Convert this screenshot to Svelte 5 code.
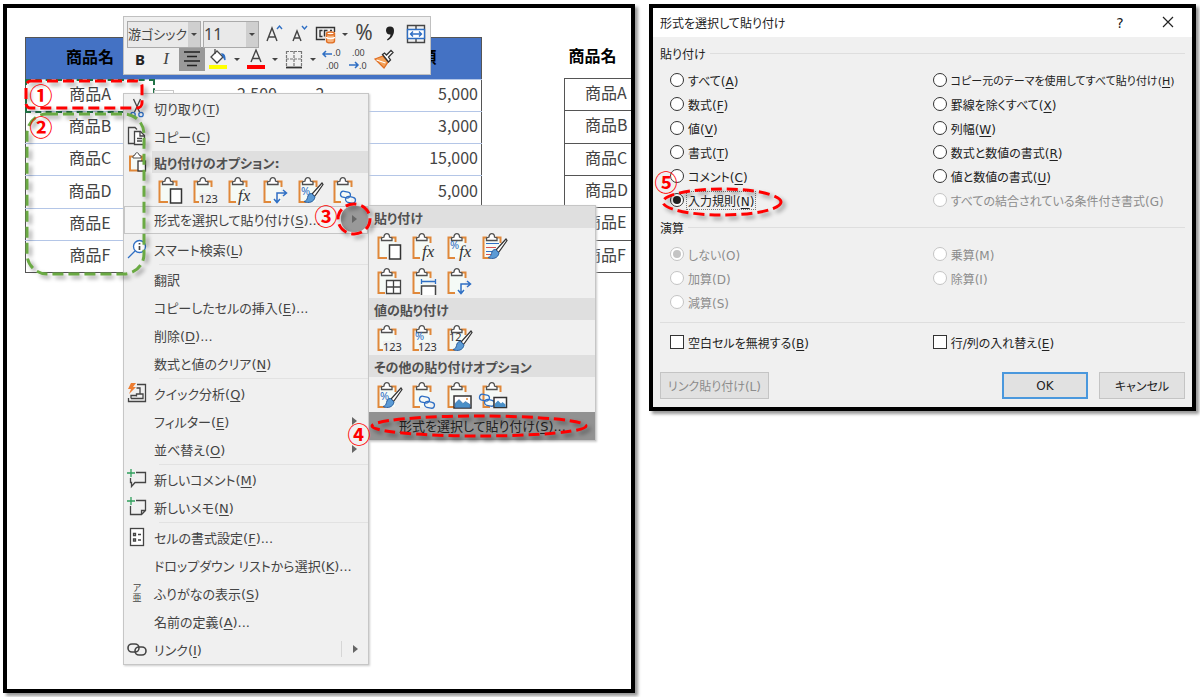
<script lang="ts">
  type Item = {
    text: string;
    key: string;
    tail?: string;
    icon?: string;
    more?: boolean;
    sep?: boolean;
  };

  const rows = [
    ["商品A", "2,500", "2", "5,000"],
    ["商品B", "", "", "3,000"],
    ["商品C", "", "", "15,000"],
    ["商品D", "", "", "5,000"],
    ["商品E", "", "", ""],
    ["商品F", "", "", ""],
  ];

  const topItems: Item[] = [
    { text: "切り取り", key: "T", icon: "cut" },
    { text: "コピー", key: "C", icon: "copy" },
  ];
  const items: Item[] = [
    { text: "スマート検索", key: "L", icon: "search", sep: true },
    { text: "翻訳", key: "" },
    { text: "コピーしたセルの挿入", key: "E", tail: "..." },
    { text: "削除", key: "D", tail: "..." },
    { text: "数式と値のクリア", key: "N", sep: true },
    { text: "クイック分析", key: "Q", icon: "analyze" },
    { text: "フィルター", key: "E", more: true },
    { text: "並べ替え", key: "O", more: true, sep: true },
    { text: "新しいコメント", key: "M", icon: "comment" },
    { text: "新しいメモ", key: "N", icon: "memo", sep: true },
    { text: "セルの書式設定", key: "F", tail: "...", icon: "cells" },
    { text: "ドロップダウン リストから選択", key: "K", tail: "..." },
    { text: "ふりがなの表示", key: "S", icon: "ruby" },
    { text: "名前の定義", key: "A", tail: "..." },
    { text: "リンク", key: "I", icon: "link", more: true },
  ];

  const quickPaste = ["paste", "values", "fx", "transpose", "format", "link"];
  const pasteGroups = [
    {
      title: "貼り付け",
      lines: [
        ["paste", "fx", "percentfx", "source"],
        ["grid", "widths", "transpose"],
      ],
    },
    { title: "値の貼り付け", lines: [["values", "percentvalues", "valuesformat"]] },
    {
      title: "その他の貼り付けオプション",
      lines: [["format", "link", "picture", "linkpicture"]],
    },
  ];

  const pasteChoices = [
    ["すべて", "A"],
    ["コピー元のテーマを使用してすべて貼り付け", "H"],
    ["数式", "F"],
    ["罫線を除くすべて", "X"],
    ["値", "V"],
    ["列幅", "W"],
    ["書式", "T"],
    ["数式と数値の書式", "R"],
    ["コメント", "C"],
    ["値と数値の書式", "U"],
    ["入力規則", "N"],
    ["すべての結合されている条件付き書式", "G"],
  ];
  const operations = [
    ["しない", "O"],
    ["乗算", "M"],
    ["加算", "D"],
    ["除算", "I"],
    ["減算", "S"],
  ];

  let font = $state("游ゴシック");
  let size = $state("11");
  let choice = $state("N");
  let operation = $state("O");
  let skipBlanks = $state(false);
  let transpose = $state(false);
</script>

{#snippet label(text: string, key: string, tail = "")}
  <span>{text}{#if key}(<u>{key}</u>){/if}{tail}</span>
{/snippet}

{#snippet chain()}
  <g fill="none" stroke="#2f6fc4" stroke-width="1.3">
    <rect x="-7" y="-5" width="10" height="6" rx="3" transform="rotate(12)" />
    <rect x="-1" y="-1" width="10" height="6" rx="3" transform="rotate(12)" />
  </g>
{/snippet}

{#snippet brush()}
  <path d="M24 7 L14 18 l2.500 2.500 L25 8.500z" fill="#fff" stroke="#333" stroke-width="1.200" />
  <path d="M13.500 17.500c-3 0-3.500 2-4 4-.5 2.500-1.500 3.500-3.500 4 4.500 2 10 1 11-4.500z" fill="#5b9bd5" stroke="#2b5f9e" />
{/snippet}

{#snippet pasteIcon(kind: string)}
  <svg class="paste-icon" viewBox="0 0 25 28" aria-hidden="true">
    <rect x="2" y="6" width="16" height="20" fill="#f5faf6" />
    <path
      d={kind === "paste" ? "M10 26H1.500V5.500H5M14 5.500h4.500V10" : "M8 26H1.500V5.500H5M14 5.500h4.500V11"}
      fill="none"
      stroke="#e0883a"
      stroke-width="2"
    />
    <path d="M4.500 8.500V6L7 5C7 .500 12.500 .500 12.500 5L15 6v2.500z" fill="#fff" stroke="#505050" stroke-width="1.300" />
    {#if kind === "paste"}
      <rect x="12.500" y="13" width="11" height="14" fill="#fff" stroke="#333" stroke-width="1.500" />
    {:else if kind === "values"}
      <rect x="6" y="17" width="19" height="11" fill="#f0f0f0" />
      <text x="6" y="27">123</text>
    {:else if kind === "percentvalues"}
      <text class="blue" x="3" y="16">%</text>
      <rect x="7" y="18" width="18" height="10" fill="#f0f0f0" />
      <text x="6" y="27">123</text>
    {:else if kind === "fx"}
      <text class="fx" x="10" y="25">fx</text>
    {:else if kind === "percentfx"}
      <text class="blue" x="3" y="17">%</text>
      <text class="fx" x="12" y="25">fx</text>
    {:else if kind === "transpose"}
      <path d="M14 26V17h9M11 23l3 3.500 3-3.500M20 14l3.500 3L20 20" fill="none" stroke="#2f6fc4" stroke-width="1.500" />
    {:else if kind === "format"}
      <text class="blue" x="3" y="19">%</text>
      {@render brush()}
    {:else if kind === "valuesformat"}
      <text x="2" y="17">12</text>
      {@render brush()}
    {:else if kind === "source"}
      <path d="M4 11.500h13M4 19.500h8" stroke="#2f6fc4" />
      <path d="M4 15.500h10M4 22.500h5" stroke="#d9534f" />
      {@render brush()}
    {:else if kind === "grid"}
      <path d="M9.500 13.500h14v13h-14zM16.500 13.500v13M9.500 20h14" fill="#fff" stroke="#444" stroke-width="1.300" />
    {:else if kind === "widths"}
      <path d="M9 14.500h15M9.500 12v5M23.500 12v5" stroke="#2f6fc4" stroke-width="1.300" />
      <path d="M9.500 28v-9h14v9" fill="#fff" stroke="#444" stroke-width="1.500" />
    {:else if kind === "link"}
      <g transform="translate(14 21)">{@render chain()}</g>
    {:else if kind === "picture"}
      <rect x="7" y="15" width="17" height="12" fill="#fff" stroke="#333" stroke-width="1.500" />
      <path d="M8 26.500v-4l4-4 4 4 2.500-2 4.500 3v3z" fill="#4a90c8" stroke="#2b5f9e" stroke-width=".5" />
      <circle cx="20" cy="18" r="1" fill="#e0883a" />
    {:else if kind === "linkpicture"}
      <g transform="translate(4 19)">{@render chain()}</g>
      <rect x="12" y="16.500" width="12.500" height="10" fill="#fff" stroke="#333" stroke-width="1.500" />
      <path d="M13 26v-3.500l3-3 3 3 1.500-1.500 3 2.500v2.500z" fill="#4a90c8" />
    {/if}
  </svg>
{/snippet}

{#snippet menuIcon(kind: string)}
  <svg class="menu-icon" viewBox="0 0 20 20" fill="none" stroke="#444" stroke-width="1.300" aria-hidden="true">
    {#if kind === "cut"}
      <path d="M6.500 1l6 13M13.500 1l-6 13" />
      <circle cx="6" cy="16.500" r="2.200" stroke="#2f6fc4" />
      <circle cx="14" cy="16.500" r="2.200" stroke="#2f6fc4" />
    {:else if kind === "copy"}
      <path d="M7 17.500H1.500v-16H8l2 2" />
      <path d="M7.500 5.500h6l4 4v9h-10z" fill="#fff" />
      <path d="M13 5.500V10h4.500M10 12.500h5M10 15h5" />
    {:else if kind === "search"}
      <circle cx="12.500" cy="7.500" r="6" fill="#fff" stroke="#2f6fc4" />
      <path d="M8 12l-7 7" stroke="#2f6fc4" />
      <path d="M12.500 7v4M12.500 4v1.500" stroke-width="1.700" />
    {:else if kind === "analyze"}
      <path d="M10 1.500h8.500v17H1.500V15M4 15.500h12V11H9.500v2.500M4 15.500v-3h5.500M13 11V5H9.500" />
      <path d="M4 0h5L6 4h3L2 11l2-5H1z" fill="#ed7d31" stroke="none" />
    {:else if kind === "comment"}
      <path d="M9 3.500h9.500v10H8l-3.500 4v-4h-1V9" />
      <path d="M4 0v8M0 4h8" stroke="#2e9e5b" />
    {:else if kind === "memo"}
      <path d="M9 3.500h9.500v10l-4 4h-11V9M18.500 13.500h-4v4" />
      <path d="M4 0v8M0 4h8" stroke="#2e9e5b" />
    {:else if kind === "cells"}
      <rect x="3.500" y="1.500" width="13" height="17" fill="#fff" />
      <path d="M6.500 6.500h2v2h-2zM6.500 12h2v2h-2zM11 7.500h3M11 13h3" />
    {:else if kind === "link"}
      <rect x="1" y="5" width="11" height="8" rx="4" stroke-width="1.600" />
      <rect x="8" y="8" width="11" height="8" rx="4" stroke-width="1.600" />
    {/if}
  </svg>
{/snippet}

{#snippet menuItem(item: Item)}
  <button class="item" role="menuitem">
    <span class="gutter">
      {#if item.icon === "ruby"}
        <span class="ruby">ア<br />亜</span>
      {:else if item.icon}
        {@render menuIcon(item.icon)}
      {/if}
    </span>
    {@render label(item.text, item.key, item.tail)}
    {#if item.more}
      <span class="more" class:split={item.key === "I"}></span>
    {/if}
  </button>
  {#if item.sep}
    <div class="sep"></div>
  {/if}
{/snippet}

{#snippet drop()}
  <button class="drop" aria-label="その他"><span class="caret"></span></button>
{/snippet}

<main>
  <section class="panel sheet">
    <div class="book">
      <table class="sales">
        <thead>
          <tr><th class="name">商品名</th><th class="price">単価</th><th class="qty">数量</th><th>金額</th></tr>
        </thead>
        <tbody>
          {#each rows as [name, price, qty, total], i}
            <tr>
              <td class="name" class:copied={i === 0}>{name}</td>
              <td class="num">{price}</td>
              <td class="name">{qty}</td>
              <td class="num">{total}</td>
            </tr>
          {/each}
        </tbody>
      </table>
      <table class="target">
        <thead>
          <tr><th>商品名</th></tr>
        </thead>
        <tbody>
          {#each rows as [name]}
            <tr><td>{name}</td></tr>
          {/each}
        </tbody>
      </table>
    </div>

    <span class="paste-tag"></span>

    <div class="toolbar" role="toolbar" aria-label="書式">
      <div class="tools">
        <span class="combo wide">
          <select bind:value={font} aria-label="フォント"><option>游ゴシック</option></select>
          <span class="caret"></span>
        </span>
        <span class="combo">
          <select class="size" bind:value={size} aria-label="フォント サイズ"><option>11</option></select>
          <span class="caret"></span>
        </span>
        <button class="tool" aria-label="拡大">
          <svg viewBox="0 0 22 22" fill="none" stroke="#444" stroke-width="1.400">
            <path d="M4 18L9 5l5 13M5.500 14h7" />
            <path d="M14 6l2.500-3L19 6" stroke="#2f6fc4" />
          </svg>
        </button>
        <button class="tool" aria-label="縮小">
          <svg viewBox="0 0 22 22" fill="none" stroke="#444" stroke-width="1.400">
            <path d="M4 18L8 8l4 10M5.500 15h5" />
            <path d="M13 3l2.500 3L18 3" stroke="#2f6fc4" />
          </svg>
        </button>
        <button class="tool" aria-label="通貨">
          <svg viewBox="0 0 22 22" fill="none" stroke="#333" stroke-width="1.400">
            <path d="M10 16.500H1.500v-12h18V9M7.500 7.500H5v6h2.500M9.500 13.500v-6h3M15 7.500h2" />
            <path d="M11.500 10.500v7.500c0 2.500 8 2.500 8 0v-7.500" fill="#f6b27c" stroke="#e06f24" />
            <ellipse cx="15.500" cy="10.500" rx="4" ry="1.500" fill="#fff" stroke="#e06f24" />
            <path d="M11.500 14c0 2 8 2 8 0" stroke="#fff" />
          </svg>
        </button>
        {@render drop()}
        <button class="tool percent">%</button>
        <button class="tool" aria-label="桁区切り">
          <svg viewBox="0 0 22 22" fill="#222">
            <path d="M7 7.500a4 4 0 0 1 8 0c0 4.500-2.500 8-6.500 10l-.5-1c2-1.500 3.500-3 3.500-5C9 12 7 10 7 7.500z" />
          </svg>
        </button>
        <button class="tool" aria-label="セルを結合">
          <svg viewBox="0 0 22 22" fill="none" stroke="#444" stroke-width="1.400">
            <path d="M2.500 2.500h17v17h-17zM11 2.500v4M11 15.500v4" />
            <path d="M2.500 6.500h17v9h-17zM5.500 11h11M8 8.500L5.500 11 8 13.500M14 8.500l2.500 2.500-2.500 2.500" fill="#fff" stroke="#2f6fc4" />
          </svg>
        </button>
      </div>
      <div class="tools low">
        <button class="tool bold">B</button>
        <button class="tool italic">I</button>
        <button class="tool pressed" aria-label="中央揃え">
          <svg viewBox="0 0 22 22" stroke="#222" stroke-width="1.400">
            <path d="M3 4h16M6 8.500h10M3 13h16M6 17.500h10" />
          </svg>
        </button>
        <button class="tool" aria-label="塗りつぶしの色">
          <svg viewBox="0 0 22 22" fill="none" stroke="#444" stroke-width="1.300">
            <path d="M10 3l6 6-6 6-6-6z" fill="#fff" />
            <path d="M8 1v5" />
            <path d="M15 6c3 0 3 3 3 6l-2-4z" fill="#2f6fc4" stroke="#2f6fc4" />
            <path d="M2 19h18" stroke="#ff0" stroke-width="4" />
          </svg>
        </button>
        {@render drop()}
        <button class="tool" aria-label="フォントの色">
          <svg viewBox="0 0 22 22" fill="none" stroke="#444" stroke-width="1.400">
            <path d="M6 14l5-12 5 12M8 10.500h6" />
            <path d="M2 19h18" stroke="#f00" stroke-width="4" />
          </svg>
        </button>
        {@render drop()}
        <button class="tool" aria-label="罫線">
          <svg viewBox="0 0 22 22" fill="none" stroke="#777" stroke-width="1.200">
            <path d="M3 3.500h16M3 11h16M3.500 3v16M11 3v16M18.500 3v16" stroke-dasharray="3 1" />
            <path d="M3 19.500h16" stroke="#333" stroke-width="1.800" />
          </svg>
        </button>
        {@render drop()}
        <button class="tool" aria-label="小数点以下の表示桁数を増やす">
          <svg viewBox="0 0 22 22">
            <path d="M11 6H2M5 3L2 6l3 3" fill="none" stroke="#2f6fc4" stroke-width="1.500" />
            <text x="12" y="8">.0</text><text x="5" y="21">.00</text>
          </svg>
        </button>
        <button class="tool" aria-label="小数点以下の表示桁数を減らす">
          <svg viewBox="0 0 22 22">
            <path d="M2 17h9M8 14l3 3-3 3" fill="none" stroke="#2f6fc4" stroke-width="1.500" />
            <text x="5" y="8">.00</text><text x="12" y="21">.0</text>
          </svg>
        </button>
        <button class="tool" aria-label="書式のコピー">
          <svg viewBox="0 0 22 22" fill="#fff" stroke="#333" stroke-width="1.300">
            <path d="M2 11l8-3 5 6-4 6z" fill="#f4a259" stroke="#e06f24" />
            <path d="M3.500 12l9 3" stroke="#fff" />
            <path d="M9.500 6.500l2-1.500 2 2 4.500-4.500 2 2L15.500 9l2 3-2 2z" />
          </svg>
        </button>
      </div>
    </div>

    <div class="menu" role="menu">
      {#each topItems as item}
        {@render menuItem(item)}
      {/each}
      <div class="heading first">
        <span class="gutter">
          <svg class="menu-icon" viewBox="0 0 20 20" fill="none" aria-hidden="true">
            <path d="M3 4.500h12v14H3z" fill="#f5faf6" stroke="#e0883a" stroke-width="2" />
            <path d="M6 6V4l2-1c0-3 4-3 4 0l2 1v2z" fill="#fff" stroke="#505050" />
            <rect x="11" y="9" width="7.500" height="10" fill="#fff" stroke="#333" stroke-width="1.300" />
          </svg>
        </span>
        貼り付けのオプション:
      </div>
      <div class="icons quick">
        {#each quickPaste as kind}
          <button class="paste" aria-label={kind}>{@render pasteIcon(kind)}</button>
        {/each}
      </div>
      <div class="parent">
        <button class="item open" role="menuitem">
          <span class="gutter"></span>
          {@render label("形式を選択して貼り付け", "S", "...")}
          <span class="more active"></span>
        </button>
        <div class="submenu" role="menu">
          {#each pasteGroups as group}
            <div class="heading">{group.title}</div>
            {#each group.lines as line}
              <div class="icons">
                {#each line as kind}
                  <button class="paste" aria-label={kind}>{@render pasteIcon(kind)}</button>
                {/each}
              </div>
            {/each}
          {/each}
          <button class="item current" role="menuitem">
            <span class="gutter"></span>
            {@render label("形式を選択して貼り付け", "S", "...")}
          </button>
        </div>
      </div>
      <div class="space"></div>
      {#each items as item}
        {@render menuItem(item)}
      {/each}
    </div>

    <svg class="marks">
      <g class="ring">
        <rect x="19" y="73" width="116" height="27" rx="5" />
        <rect class="green" x="20" y="106" width="117" height="160" rx="20" />
        <ellipse cx="347" cy="211" rx="16" ry="15" />
        <ellipse cx="472" cy="418" rx="107" ry="10" />
      </g>
      <text x="34" y="86">①</text>
      <text x="34" y="118">②</text>
      <text x="319" y="207">③</text>
      <text x="352" y="425">④</text>
    </svg>
  </section>

  <section class="panel dialog" role="dialog" aria-labelledby="dialog-title">
    <header>
      <h1 id="dialog-title">形式を選択して貼り付け</h1>
      <button aria-label="ヘルプ">?</button>
      <button aria-label="閉じる">
        <svg viewBox="0 0 12 12" stroke="#222" stroke-width="1.200"><path d="M1 1l10 10M11 1L1 11" /></svg>
      </button>
    </header>
    <form onsubmit={(e) => e.preventDefault()}>
      <fieldset>
        <legend>貼り付け</legend>
        <div class="choices">
          {#each pasteChoices as [text, key]}
            <label class:disabled={key === "G"} class:focused={key === choice} class:long={text.length > 18}>
              <input type="radio" name="paste" value={key} bind:group={choice} disabled={key === "G"} />
              {@render label(text, key)}
            </label>
          {/each}
        </div>
      </fieldset>
      <fieldset disabled>
        <legend>演算</legend>
        <div class="choices">
          {#each operations as [text, key]}
            <label class="disabled">
              <input type="radio" name="operation" value={key} bind:group={operation} />
              {@render label(text, key)}
            </label>
          {/each}
        </div>
      </fieldset>
      <div class="choices checks">
        <label><input type="checkbox" bind:checked={skipBlanks} />{@render label("空白セルを無視する", "B")}</label>
        <label><input type="checkbox" bind:checked={transpose} />{@render label("行/列の入れ替え", "E")}</label>
      </div>
      <footer>
        <button class="link" type="button" disabled>リンク貼り付け(L)</button>
        <button class="ok" type="submit">OK</button>
        <button type="button">キャンセル</button>
      </footer>
    </form>
    <svg class="marks">
      <g class="ring"><ellipse cx="69" cy="194" rx="59" ry="13" /></g>
      <text x="13" y="173">⑤</text>
    </svg>
  </section>
</main>

<style>
  :global(body) {
    margin: 0;
    background: #fff;
  }
  main {
    display: grid;
    grid-template-columns: minmax(0, 632fr) minmax(0, 547fr);
    align-items: start;
    gap: 14px;
    padding: 4px 4px 4px 3px;
    font-family: "DejaVu Sans", "Noto Sans CJK JP", sans-serif;
    font-feature-settings: "palt";
    font-size: 13px;
    color: #444;
  }
  button {
    padding: 0;
    border: 0;
    background: none;
    color: inherit;
    font: inherit;
    font-feature-settings: inherit;
  }
  u {
    text-underline-offset: 2px;
  }
  .panel {
    position: relative;
    border: 4px solid #000;
    box-shadow: 3px 3px 3px #999;
  }
  .sheet {
    display: grid;
    background: #fff;
  }

  .book {
    grid-area: 1 / 1;
    display: flex;
    align-items: flex-start;
    gap: 82px;
    min-width: 0;
    padding: 29px 0 0 18px;
    overflow: hidden;
    font: 16px "Noto Sans CJK JP", sans-serif;
  }
  table {
    flex: none;
    height: 236px;
    border-collapse: collapse;
    table-layout: fixed;
    line-height: 20px;
  }
  th,
  td {
    padding: 0 0 5px;
  }
  th {
    height: 36px;
    color: #000;
  }
  .sales {
    width: 457px;
    border: 1px solid #555;
  }
  .sales th {
    background: #4472c4;
  }
  .sales td {
    border-top: 1px solid #b4c6e7;
  }
  .name {
    width: 128px;
    text-align: center;
  }
  .price {
    width: 126px;
  }
  .qty {
    width: 80px;
  }
  .num {
    padding-right: 3px;
    text-align: right;
  }
  .copied {
    outline: 2px dashed #217346;
    outline-offset: -1px;
  }
  .target {
    width: 130px;
    text-align: left;
  }
  .target th {
    padding-left: 4px;
  }
  .target td {
    padding-left: 20px;
    border: 1px solid #555;
  }
  .paste-tag {
    position: absolute;
    top: 82px;
    left: 147px;
    width: 18px;
    height: 10px;
    border: 1px solid #c8c8c8;
    background: #fff;
  }

  .toolbar {
    position: absolute;
    top: 8px;
    left: 116px;
    padding: 4px 1px 3px 3px;
    border: 1px solid #c0c0c0;
    background: #f0f0f0;
  }
  .tools {
    display: flex;
    align-items: center;
    height: 26px;
  }
  .low {
    height: 24px;
  }
  .combo {
    position: relative;
    box-sizing: border-box;
    display: flex;
    width: 56px;
    height: 27px;
    margin-right: 2px;
    border: 1px solid #aaa;
    background: #e6e6e6;
  }
  .wide {
    width: 74px;
  }
  .combo select {
    width: 100%;
    padding: 0;
    border: 0;
    appearance: none;
    background: linear-gradient(to left, #cfcfcf 12px, #e9e9e9 12px);
    color: #444;
    font: 13px "Noto Sans", "Noto Sans CJK JP", sans-serif;
    font-feature-settings: inherit;
  }
  .combo .size {
    font-size: 16px;
  }
  .combo .caret {
    position: absolute;
    top: 11px;
    right: 3px;
  }
  .caret {
    display: inline-block;
    border: 3px solid transparent;
    border-top-color: #444;
    border-bottom: 0;
    pointer-events: none;
  }
  .tool {
    display: grid;
    place-items: center;
    width: 26px;
    height: 24px;
  }
  .tool svg {
    width: 22px;
    height: 22px;
    overflow: visible;
  }
  .tool text {
    font: 9px "Noto Sans", sans-serif;
    fill: #444;
  }
  .drop {
    display: grid;
    place-items: center;
    width: 12px;
    height: 24px;
  }
  .percent {
    font: 21px/20px "Noto Sans", sans-serif;
    align-content: start;
  }
  .bold {
    color: #222;
    font: bold 15px "Noto Sans", sans-serif;
  }
  .italic {
    font: italic 17px "Liberation Serif", serif;
  }
  .pressed {
    background: #999;
  }

  .menu {
    grid-area: 1 / 1;
    z-index: 1;
    justify-self: start;
    box-sizing: border-box;
    width: 246px;
    margin: 85px 0 24px 116px;
    padding-top: 1px;
    border: 1px solid #c6c6c6;
    background: #f0f0f0;
    box-shadow: 1px 1px 2px #ccc;
  }
  .item {
    display: flex;
    align-items: center;
    width: 100%;
    height: 28px;
    padding-bottom: 2px;
    text-align: left;
    white-space: nowrap;
  }
  .gutter {
    display: grid;
    flex: none;
    place-items: center;
    width: 26px;
    margin-right: 4px;
  }
  .menu-icon {
    width: 20px;
    height: 20px;
  }
  .ruby {
    font-size: 9px;
    line-height: 10px;
    text-align: center;
  }
  .more {
    box-sizing: border-box;
    display: grid;
    place-items: center;
    width: 27px;
    height: 26px;
    margin-left: auto;
  }
  .more::after {
    content: "";
    border: 4px solid transparent;
    border-left: 5px solid #666;
    border-right: 0;
  }
  .split {
    height: 16px;
    border-left: 1px solid #d6d6d6;
  }
  .active {
    border-radius: 12px;
    background: #999;
  }
  .sep {
    height: 1px;
    margin: 0 0 1px 35px;
    background: #e2e2e2;
  }
  .space {
    height: 2px;
  }
  .heading {
    display: flex;
    align-items: center;
    height: 22px;
    padding-left: 5px;
    background: #dfdfdf;
    font-weight: bold;
    color: #505050;
  }
  .heading.first {
    padding-left: 0;
    background: linear-gradient(to right, #f0f0f0 28px, #dfdfdf 28px);
  }
  .icons {
    display: flex;
    align-items: center;
    gap: 10px;
    height: 35px;
    padding-left: 8px;
  }
  .quick {
    height: 33px;
    padding-left: 34px;
  }
  .paste {
    width: 25px;
    height: 28px;
  }
  .paste-icon {
    display: block;
    width: 25px;
    height: 28px;
    overflow: visible;
  }
  .paste-icon text {
    font: 11px "Noto Sans", sans-serif;
    fill: #333;
  }
  .paste-icon .blue {
    fill: #2f6fc4;
  }
  .paste-icon .fx {
    font: italic 17px "Liberation Serif", serif;
  }
  .parent {
    position: relative;
  }
  .open {
    box-shadow: inset 0 0 0 1px #c6c6c6;
    background: #f3f3f3;
  }
  .submenu {
    position: absolute;
    top: -1px;
    left: 100%;
    width: 226px;
    border: 1px solid #c6c6c6;
    background: #f0f0f0;
    box-shadow: 1px 1px 2px #ccc;
  }
  .current {
    background: #929292;
    color: #222;
  }

  .marks {
    position: absolute;
    inset: 0;
    z-index: 2;
    width: 100%;
    height: 100%;
    overflow: visible;
    pointer-events: none;
  }
  .ring {
    fill: none;
    stroke: #f00;
    stroke-width: 3px;
    stroke-dasharray: 11 5;
    filter: drop-shadow(3px 3px 2px rgb(0 0 0 / 0.4));
  }
  .green {
    stroke: #6aaa43;
  }
  .marks text {
    font: 700 23px "Noto Sans CJK JP", sans-serif;
    fill: #f00;
    text-anchor: middle;
    dominant-baseline: central;
  }

  .dialog {
    background: #f0f0f0;
    color: #222;
    font-size: 12px;
  }
  header {
    display: flex;
    align-items: center;
    height: 29px;
    padding-left: 7px;
    background: #fff;
  }
  h1 {
    margin: 0 auto 0 0;
    font-size: 12px;
    font-weight: normal;
  }
  header button {
    width: 48px;
    font-size: 14px;
  }
  header svg {
    width: 12px;
    height: 12px;
  }
  form {
    padding: 6px 7px 8px;
  }
  fieldset {
    min-width: 0;
    margin: 0 0 5px;
    padding: 0;
    border: 0;
  }
  legend {
    display: flex;
    align-items: center;
    gap: 4px;
    width: 100%;
    height: 20px;
    margin-bottom: 5px;
    padding: 0;
  }
  legend::after {
    content: "";
    flex: 1;
    height: 1px;
    background: #dedede;
  }
  .choices {
    display: grid;
    grid-template-columns: minmax(0, 51fr) minmax(0, 49fr);
    grid-auto-rows: 24px;
    padding-left: 10px;
  }
  .choices label {
    display: flex;
    align-items: center;
    gap: 3px;
    white-space: nowrap;
  }
  .choices span {
    padding: 0 1px;
  }
  .choices .long {
    font-size: 11px;
  }
  .disabled {
    color: #8c8c8c;
  }
  .disabled u {
    text-decoration: none;
  }
  .focused span {
    outline: 1px dotted #777;
  }
  input {
    display: grid;
    flex: none;
    place-items: center;
    width: 14px;
    height: 14px;
    margin: 0;
    appearance: none;
    border: 1px solid #333;
    background: #fff;
  }
  input[type="radio"] {
    border-radius: 50%;
  }
  input:disabled {
    border-color: #c4c4c4;
  }
  input:checked::before {
    content: "";
    width: 8px;
    height: 8px;
    border-radius: 50%;
    background: #222;
  }
  input:disabled:checked::before {
    background: #c4c4c4;
  }
  .checks {
    margin-top: 8px;
    padding-top: 8px;
    background: linear-gradient(#dedede, #dedede) top / 100% 1px no-repeat;
  }
  footer {
    display: flex;
    gap: 11px;
    margin-top: 18px;
  }
  footer button {
    box-sizing: border-box;
    width: 86px;
    height: 27px;
    border: 1px solid #c4c4c4;
    background: #e1e1e1;
  }
  footer .link {
    width: 109px;
    margin-right: auto;
    color: #8c8c8c;
  }
  footer .ok {
    border: 2px solid #4a98dd;
  }
</style>
